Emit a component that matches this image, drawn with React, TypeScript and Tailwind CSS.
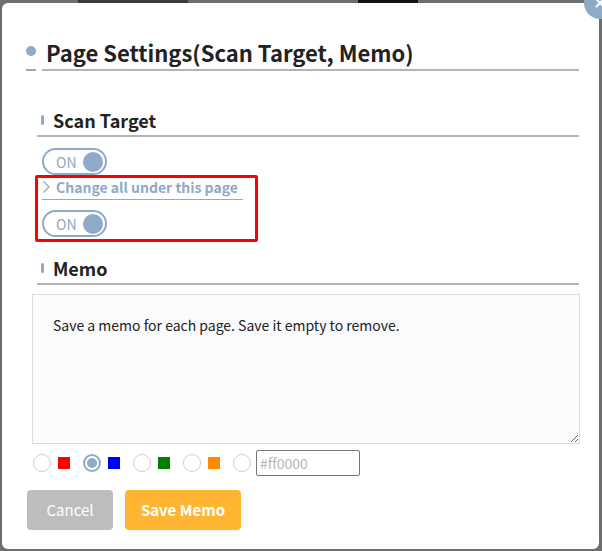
import { useState } from 'react';

const FONT = { fontFamily: '"Noto Sans CJK KR", "Noto Sans", sans-serif' };

function Toggle() {
    return (
        <div className="flex h-[27px] w-[65px] items-center justify-between rounded-full border-2 border-[#8eaac6] bg-white pl-[12px] pr-[2px]">
            <span className="text-[14px] leading-none text-[#8eaac6]">ON</span>
            <span className="h-[20px] w-[20px] rounded-full bg-[#8eaac6]" />
        </div>
    );
}

function SectionTitle({ label }: { label: string }) {
    return (
        <div className="ml-[35px] mr-[20px] flex items-center gap-[9px] border-b-2 border-[#b4b4b4] pb-[2px] pl-[4px]">
            <span className="h-[10px] w-[3px] rounded-full bg-[#8eaac6]" />
            <span className="text-[18px] font-bold leading-[26px] text-[#222]">{label}</span>
        </div>
    );
}

const COLORS = ['#ff0000', '#0000ff', '#008000', '#ff8c00'];

export default function App() {
    const [picked, setPicked] = useState(1);

    return (
        <div className="relative h-[551px] w-[602px] overflow-hidden bg-[#6e6e6e] pl-[2px] pt-[3px]" style={FONT}>
            {/* 背景的模糊圖示 */}
            <div className="absolute left-[78px] top-0 h-[3px] w-[110px] bg-[#3a3a3a]" />
            <div className="absolute left-[358px] top-0 h-[3px] w-[60px] bg-[#111]" />

            <div className="h-[546px] w-[597px] rounded-[6px] bg-white">
                {/* 標題 */}
                <div className="flex items-end pl-[24px] pr-[20px] pt-[34px]">
                    <div className="flex flex-col items-center">
                        <span className="mb-[13px] h-[10px] w-[10px] rounded-full bg-[#8eaac6]" />
                        <span className="h-[2px] w-[10px] bg-[#8eaac6]" />
                    </div>
                    <div className="ml-[6px] flex-1 border-b-2 border-[#b4b4b4] pb-[2px]">
                        <h1 className="pl-[4px] text-[22px] font-bold leading-[30px] text-[#222]">
                            Page Settings(Scan Target, Memo)
                        </h1>
                    </div>
                </div>

                <div className="mt-[36px]">
                    <SectionTitle label="Scan Target" />
                </div>

                <div className="ml-[40px] mt-[11px]">
                    <Toggle />
                </div>

                <div className="ml-[33px] w-[223px] rounded-[2px] border-[3px] border-[#ff0000] px-[4px] pb-[2px]">
                    <div className="flex w-[201px] items-center gap-[5px] border-b border-[#8eaac6] pb-[3px]">
                        <svg width="9" height="14" viewBox="0 0 9 14" fill="none" stroke="#8eaac6" strokeWidth="1.4">
                            <path d="M1.5 1.5l5.5 5.5-5.5 5.5" />
                        </svg>
                        <span className="text-[14px] font-bold leading-[18px] text-[#8eaac6]">Change all under this page</span>
                    </div>
                    <div className="mt-[10px]">
                        <Toggle />
                    </div>
                </div>

                <div className="mt-[13px]">
                    <SectionTitle label="Memo" />
                </div>

                <div className="ml-[30px] mr-[19px] mt-[9px]">
                    <textarea
                        className="block h-[150px] w-full resize-y border border-[#dcdcdc] bg-[#fafbfd] px-[20px] py-[20px] text-[14px] text-[#222] outline-none"
                        defaultValue="Save a memo for each page. Save it empty to remove."
                        style={FONT}
                    />
                </div>

                <div className="ml-[31px] mt-[6px] flex items-center">
                    {COLORS.map((c, i) => (
                        <button key={c} onClick={() => setPicked(i)} className="mr-[13px] flex items-center gap-[7px]">
                            {picked === i ? (
                                <span className="flex h-[18px] w-[18px] items-center justify-center rounded-full border-2 border-[#8eaac6]">
                                    <span className="h-[10px] w-[10px] rounded-full bg-[#8eaac6]" />
                                </span>
                            ) : (
                                <span className="h-[18px] w-[18px] rounded-full border border-[#cfcfcf] bg-white" />
                            )}
                            <span className="h-[12px] w-[12px]" style={{ backgroundColor: c }} />
                        </button>
                    ))}
                    <span className="h-[18px] w-[18px] rounded-full border border-[#cfcfcf] bg-white" />
                    <input
                        className="ml-[5px] h-[26px] w-[104px] rounded-[2px] border border-[#777] px-[3px] text-[14px] text-[#222] outline-none placeholder:text-[#b8b8b8]"
                        placeholder="#ff0000"
                        style={FONT}
                    />
                </div>

                <div className="ml-[25px] mt-[14px] flex gap-[12px]">
                    <button className="h-[40px] w-[86px] rounded-[4px] bg-[#bdbdbd] text-[15px] text-white">Cancel</button>
                    <button className="h-[40px] w-[116px] rounded-[4px] bg-[#ffb531] text-[15px] font-semibold text-white">Save Memo</button>
                </div>
            </div>

            {/* 關閉按鈕 */}
            <div className="absolute right-[-14px] top-[-13px] flex h-[32px] w-[32px] items-center justify-center rounded-full bg-[#8eaac6]">
                <svg width="12" height="12" viewBox="0 0 12 12" stroke="white" strokeWidth="2">
                    <path d="M2 2l8 8M10 2l-8 8" />
                </svg>
            </div>
        </div>
    );
}
